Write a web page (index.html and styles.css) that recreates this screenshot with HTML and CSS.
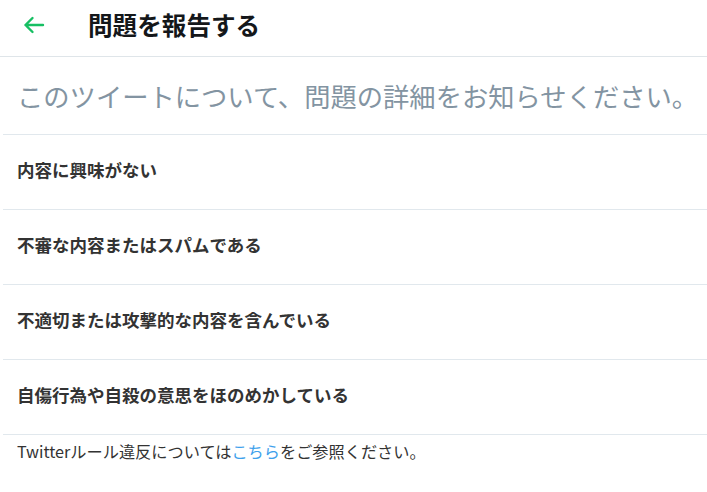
FILE: index.html
```html
<!DOCTYPE html>
<html lang="ja">
<head>
<meta charset="utf-8">
<title>問題を報告する</title>
<link rel="stylesheet" href="styles.css">
</head>
<body>
<header class="header">
  <span class="back">
    <svg width="22" height="18" viewBox="0 0 22 18" aria-hidden="true">
      <path d="M20 9H2.5M9.5 2L2.5 9l7 7" fill="none" stroke="#17bf63" stroke-width="2.4" stroke-linecap="round" stroke-linejoin="round"/>
    </svg>
  </span>
  <h1 class="title">問題を報告する</h1>
</header>
<main class="content">
  <p class="lead">このツイートについて、問題の詳細をお知らせください。</p>
  <ul class="options">
    <li class="option">内容に興味がない</li>
    <li class="option">不審な内容またはスパムである</li>
    <li class="option">不適切または攻撃的な内容を含んでいる</li>
    <li class="option">自傷行為や自殺の意思をほのめかしている</li>
  </ul>
  <p class="footer">Twitterルール違反については<a class="link" href="#">こちら</a>をご参照ください。</p>
</main>
</body>
</html>
```
FILE: styles.css
```css
html, body {
  margin: 0;
  padding: 0;
  background: #ffffff;
}
body {
  font-family: "Noto Sans CJK JP", "Noto Sans", sans-serif;
  color: #333333;
}
.header {
  height: 57px;
  display: flex;
  align-items: center;
  padding-bottom: 7px;
  box-sizing: border-box;
  border-bottom: 1px solid #dfe5e9;
}
.back {
  width: 22px;
  height: 18px;
  margin-left: 23px;
  display: flex;
}
.title {
  margin: 0 0 0 43px;
  font-size: 24.6px;
  font-weight: 700;
  color: #14171a;
  line-height: 1;
}
.content {
  margin-left: 3px;
}
.lead {
  margin: 0;
  height: 77px;
  display: flex;
  align-items: center;
  padding-left: 14px;
  font-size: 26.3px;
  color: #8394a2;
  border-bottom: 1px solid #e1e8ed;
  white-space: nowrap;
}
.options {
  list-style: none;
  margin: 0;
  padding: 0;
}
.option {
  height: 68px;
  padding-bottom: 6px;
  display: flex;
  align-items: center;
  padding-left: 14px;
  font-size: 17.5px;
  font-weight: 700;
  color: #333333;
  border-bottom: 1px solid #e1e8ed;
}
.footer {
  margin: 0;
  padding: 4px 0 0 14px;
  font-size: 16.2px;
  color: #333333;
}
.link {
  color: #3ea1ec;
  text-decoration: none;
}
```
